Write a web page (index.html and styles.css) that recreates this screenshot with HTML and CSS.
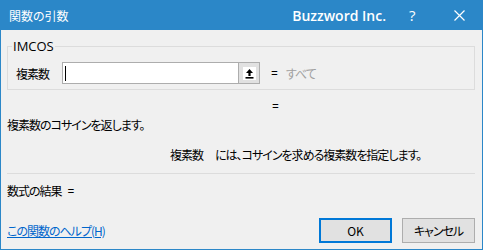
FILE: index.html
```html
<!DOCTYPE html>
<html lang="ja">
<head>
    <meta charset="UTF-8">
    <title>関数の引数</title>
    <link rel="stylesheet" href="styles.css">
</head>
<body>

<div class="dialog">
    <div class="titlebar">
        <span class="title">関数の引数</span>
        <span class="brand">Buzzword Inc.</span>
        <span class="help-btn">?</span>
        <span class="close-btn">
            <svg width="11" height="11" viewBox="0 0 11 11"><path d="M0.5 0.5 L10.5 10.5 M10.5 0.5 L0.5 10.5" stroke="#fff" stroke-width="1.2" fill="none"/></svg>
        </span>
    </div>

    <div class="content">
        <fieldset class="args">
            <legend>IMCOS</legend>
            <div class="arg-row">
                <span class="arg-label">複素数</span>
                <div class="arg-input"><span class="caret"></span></div>
                <div class="ref-btn">
                    <svg width="13" height="13" viewBox="0 0 13 13">
                        <rect width="13" height="13" fill="#fff"/>
                        <path d="M6.5 2 L10 6 L7.6 6 L7.6 9 L5.4 9 L5.4 6 L3 6 Z" fill="#000"/>
                        <rect x="2.5" y="10" width="8" height="1.6" fill="#000"/>
                    </svg>
                </div>
                <span class="eq">=</span>
                <span class="arg-value">すべて</span>
            </div>
        </fieldset>

        <div class="result-eq"><span class="eq">=</span></div>
        <p class="func-desc">複素数のコサインを返します。</p>
        <p class="arg-desc"><span class="arg-name">複素数</span>には、コサインを求める複素数を指定します。</p>

        <div class="divider"></div>

        <p class="formula">数式の結果<span class="eq">=</span></p>

        <div class="footer">
            <a class="help-link" href="#">この関数のヘルプ(H)</a>
            <div class="buttons">
                <button class="btn btn-ok">OK</button>
                <button class="btn">キャンセル</button>
            </div>
        </div>
    </div>
</div>

</body>
</html>
```

FILE: styles.css
```css
body {
    margin: 0;
    padding: 0;
    background-color: #f0f0f0;
    font-family: 'Noto Sans CJK JP', 'Noto Sans', sans-serif;
    font-size: 12px;
    font-feature-settings: "palt";
    letter-spacing: -1px;
    color: #000000;
}

.dialog {
    width: 483px;
    height: 250px;
    box-sizing: border-box;
    border: 1px solid #2b87c8;
    border-top: none;
    background-color: #f0f0f0;
    display: flex;
    flex-direction: column;
}

/* Title bar */
.titlebar {
    height: 30px;
    margin: 0 -1px;
    background-color: #2b87c8;
    color: #ffffff;
    display: flex;
    align-items: center;
    padding-left: 9px;
}

.title {
    font-size: 12px;
    letter-spacing: 0;
    flex: 1;
}

.brand {
    font-family: 'Open Sans', 'Noto Sans', sans-serif;
    font-size: 14px;
    font-weight: 600;
    letter-spacing: 0;
}

.help-btn {
    font-family: 'Open Sans', sans-serif;
    font-size: 15px;
    letter-spacing: 0;
    margin-left: 23px;
    width: 8px;
}

.close-btn {
    display: flex;
    margin-left: 37px;
    margin-right: 18px;
}

/* Body */
.content {
    flex: 1;
    padding: 0 7px 0 6px;
    display: flex;
    flex-direction: column;
}

.args {
    margin: 7px 0 0 0;
    padding: 7px 8px 5px 8px;
    border: 1px solid #dcdcdc;
    min-width: 0;
}

.args legend {
    font-family: 'Open Sans', sans-serif;
    font-size: 13px;
    letter-spacing: 0;
    line-height: 18px;
    padding: 0 1px;
    margin-left: -4px;
}

.arg-row {
    display: flex;
    align-items: center;
    height: 22px;
}

.arg-label {
    width: 46px;
}

.arg-input {
    width: 173px;
    height: 20px;
    border: 1px solid #adadad;
    background-color: #ffffff;
    display: flex;
    align-items: center;
    padding-left: 2px;
    box-sizing: content-box;
}

.caret {
    width: 1px;
    height: 15px;
    background-color: #000000;
}

.ref-btn {
    width: 20px;
    height: 20px;
    border: 1px solid #adadad;
    border-left: none;
    background-color: #e1e1e1;
    display: flex;
    align-items: center;
    justify-content: center;
}

.eq {
    font-family: 'Open Sans', sans-serif;
    font-size: 12px;
    letter-spacing: 0;
}

.arg-row .eq {
    margin-left: 11px;
}

.arg-value {
    color: #a0a0a0;
    margin-left: 8px;
}

.result-eq {
    height: 16px;
    margin-top: 8px;
    padding-left: 265px;
    display: flex;
    align-items: center;
}

.func-desc {
    margin: 3px 0 0 0;
    line-height: 16px;
}

.arg-desc {
    margin: 14px 0 0 0;
    padding-left: 163px;
    line-height: 16px;
}

.arg-name {
    margin-right: 12px;
}

.divider {
    height: 1px;
    background-color: #dcdcdc;
    margin-top: 10px;
}

.formula {
    margin: 9px 0 0 0;
    line-height: 16px;
}

.formula .eq {
    margin-left: 6px;
}

.footer {
    display: flex;
    align-items: center;
    justify-content: space-between;
    margin-top: 18px;
}

.help-link {
    color: #0066cc;
    text-decoration: underline;
}

.buttons {
    display: flex;
    gap: 10px;
}

.btn {
    width: 73px;
    height: 25px;
    box-sizing: border-box;
    border: 1px solid #adadad;
    background-color: #e1e1e1;
    font-family: 'Noto Sans CJK JP', 'Noto Sans', sans-serif;
    font-feature-settings: "palt";
    font-size: 12px;
    letter-spacing: -1px;
    padding: 0;
    color: #000000;
}

.btn-ok {
    border: 2px solid #0078d7;
    letter-spacing: 0;
}
```
